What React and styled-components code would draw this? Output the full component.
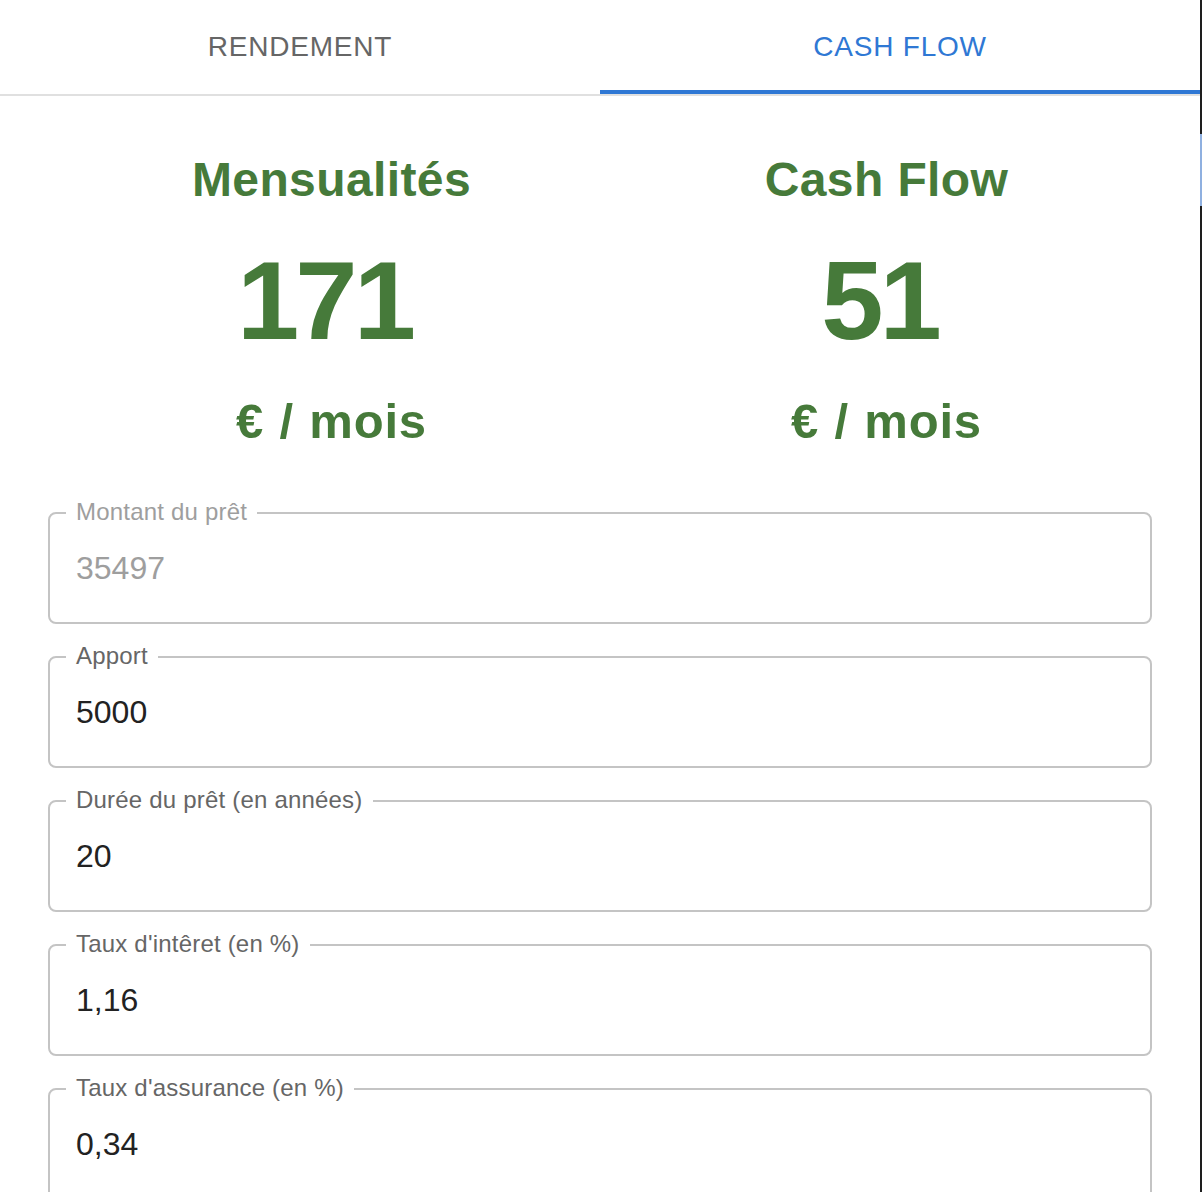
import styled, { createGlobalStyle } from "styled-components";

const GlobalStyle = createGlobalStyle`
  html, body {
    margin: 0;
    padding: 0;
    background: #fff;
    overflow: hidden;
  }
  body {
    font-family: "Liberation Sans", Arial, sans-serif;
  }
`;

const fields = [
  { id: "montant", label: "Montant du prêt", value: "35497", disabled: true },
  { id: "apport", label: "Apport", value: "5000" },
  { id: "duree", label: "Durée du prêt (en années)", value: "20" },
  { id: "taux", label: "Taux d'intêret (en %)", value: "1,16" },
  { id: "assurance", label: "Taux d'assurance (en %)", value: "0,34" },
];

const stats = [
  { title: "Mensualités", value: 171 },
  { title: "Cash Flow", value: 51 },
];

const Page = styled.div`
  display: flex;
  height: 1192px;
  overflow: hidden;
`;

const Main = styled.div`
  width: 1200px;
  flex: none;
`;

const SideEdge = styled.div`
  width: 2px;
  flex: none;
  background: linear-gradient(
    to bottom,
    #1e1e1e 0,
    #1e1e1e 134px,
    #8fb0e0 134px,
    #8fb0e0 206px,
    #1e1e1e 206px
  );
`;

const TabBar = styled.div`
  display: flex;
  border-bottom: 2px solid #e0e0e0;
`;

const Tab = styled.button`
  flex: 1;
  height: 94px;
  border: none;
  background: none;
  padding: 0;
  font-family: "Liberation Sans", Arial, sans-serif;
  font-size: 28px;
  letter-spacing: 0.8px;
  line-height: 94px;
  text-transform: uppercase;
  color: ${(p) => (p.$active ? "#2f78d4" : "#666")};
  box-shadow: ${(p) => (p.$active ? "inset 0 -4px 0 #2f78d4" : "none")};
  cursor: pointer;
`;

const Stats = styled.div`
  display: grid;
  grid-template-columns: 555px 555px;
  padding: 56px 0 0 54px;
`;

const Stat = styled.div`
  display: flex;
  flex-direction: column;
  align-items: center;
  color: #467a3a;
  font-weight: 700;
`;

const StatTitle = styled.div`
  font-size: 48px;
  line-height: 56px;
  letter-spacing: 0.4px;
`;

const StatValue = styled.div`
  font-size: 112px;
  line-height: 120px;
  letter-spacing: -4px;
  padding-right: 14px;
  margin-top: 33px;
`;

const StatUnit = styled.div`
  font-size: 49px;
  line-height: 56px;
  letter-spacing: 0.8px;
  word-spacing: 1px;
  margin-top: 32px;
`;

const Form = styled.div`
  display: flex;
  flex-direction: column;
  gap: 32px;
  padding: 63px 48px 0;
`;

const FieldBox = styled.div`
  position: relative;
  height: 112px;
  box-sizing: border-box;
  border: 2px solid #c4c4c4;
  border-radius: 8px;
  flex: none;
`;

const Label = styled.label`
  position: absolute;
  top: -16px;
  left: 16px;
  padding: 0 10px;
  background: #fff;
  font-size: 24px;
  line-height: 28px;
  letter-spacing: 0.2px;
  color: ${(p) => (p.$disabled ? "#9e9e9e" : "#666")};
`;

const Input = styled.input`
  display: block;
  width: 100%;
  height: 100%;
  box-sizing: border-box;
  border: none;
  outline: none;
  background: transparent;
  padding: 0 26px;
  font-family: "Liberation Sans", Arial, sans-serif;
  font-size: 32px;
  color: #222;
  border-radius: 8px;

  &:disabled {
    color: #9e9e9e;
    -webkit-text-fill-color: #9e9e9e;
  }
`;

const App = () => {
  return (
    <Page>
      <GlobalStyle />
      <Main>
        <TabBar>
          <Tab>Rendement</Tab>
          <Tab $active>Cash Flow</Tab>
        </TabBar>

        <Stats>
          {stats.map((stat) => (
            <Stat key={stat.title}>
              <StatTitle>{stat.title}</StatTitle>
              <StatValue>{stat.value}</StatValue>
              <StatUnit>€ / mois</StatUnit>
            </Stat>
          ))}
        </Stats>

        <Form>
          {fields.map((field) => (
            <FieldBox key={field.id}>
              <Label htmlFor={field.id} $disabled={field.disabled}>
                {field.label}
              </Label>
              <Input
                id={field.id}
                defaultValue={field.value}
                disabled={field.disabled}
              />
            </FieldBox>
          ))}
        </Form>
      </Main>
      <SideEdge />
    </Page>
  );
};

export default App;
